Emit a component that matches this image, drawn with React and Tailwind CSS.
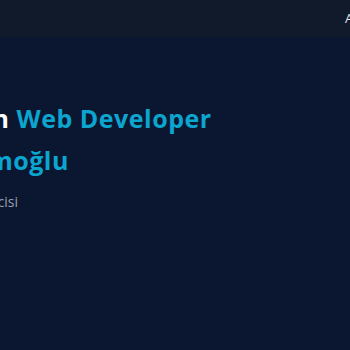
import React from "react";

const links = ["Anasayfa", "Hakkımda", "Projeler", "İletişim"];

export default function App() {
  return (
    <div
      className="w-[350px] h-[350px] overflow-hidden bg-[#0b1730] text-white"
      style={{ fontFamily: '"Open Sans", "Noto Sans", sans-serif' }}
    >
      {/* Navbar */}
      <nav className="h-[37px] bg-[#111a2a] flex justify-center overflow-hidden">
        <div className="w-[700px] shrink-0 flex items-center justify-between pl-10 pr-0">
          <span className="text-base font-bold text-cyan-500">Portfolyo</span>
          <ul className="flex gap-6 text-[13px] text-gray-200 w-[180px]">
            {links.map((l) => (
              <li key={l}>{l}</li>
            ))}
          </ul>
        </div>
      </nav>

      {/* Hero */}
      <section className="flex justify-center overflow-hidden">
        <div className="w-[700px] shrink-0 pl-[103px] pt-[61px]">
          <h1 className="text-[25px] font-bold leading-[41px] tracking-[0.5px] pl-[32px]">
            Ben <span className="text-[#0ba5cf]">Web Developer</span>
          </h1>
          <h2 className="text-[25px] font-bold leading-[41px] tracking-[0.5px] text-[#0ba5cf] pt-[1px]">
            Karamoğlu
          </h2>
          <p className="mt-[11px] pl-[20px] text-sm leading-5 text-gray-400">
            Geliştiricisi
          </p>
        </div>
      </section>
    </div>
  );
}
